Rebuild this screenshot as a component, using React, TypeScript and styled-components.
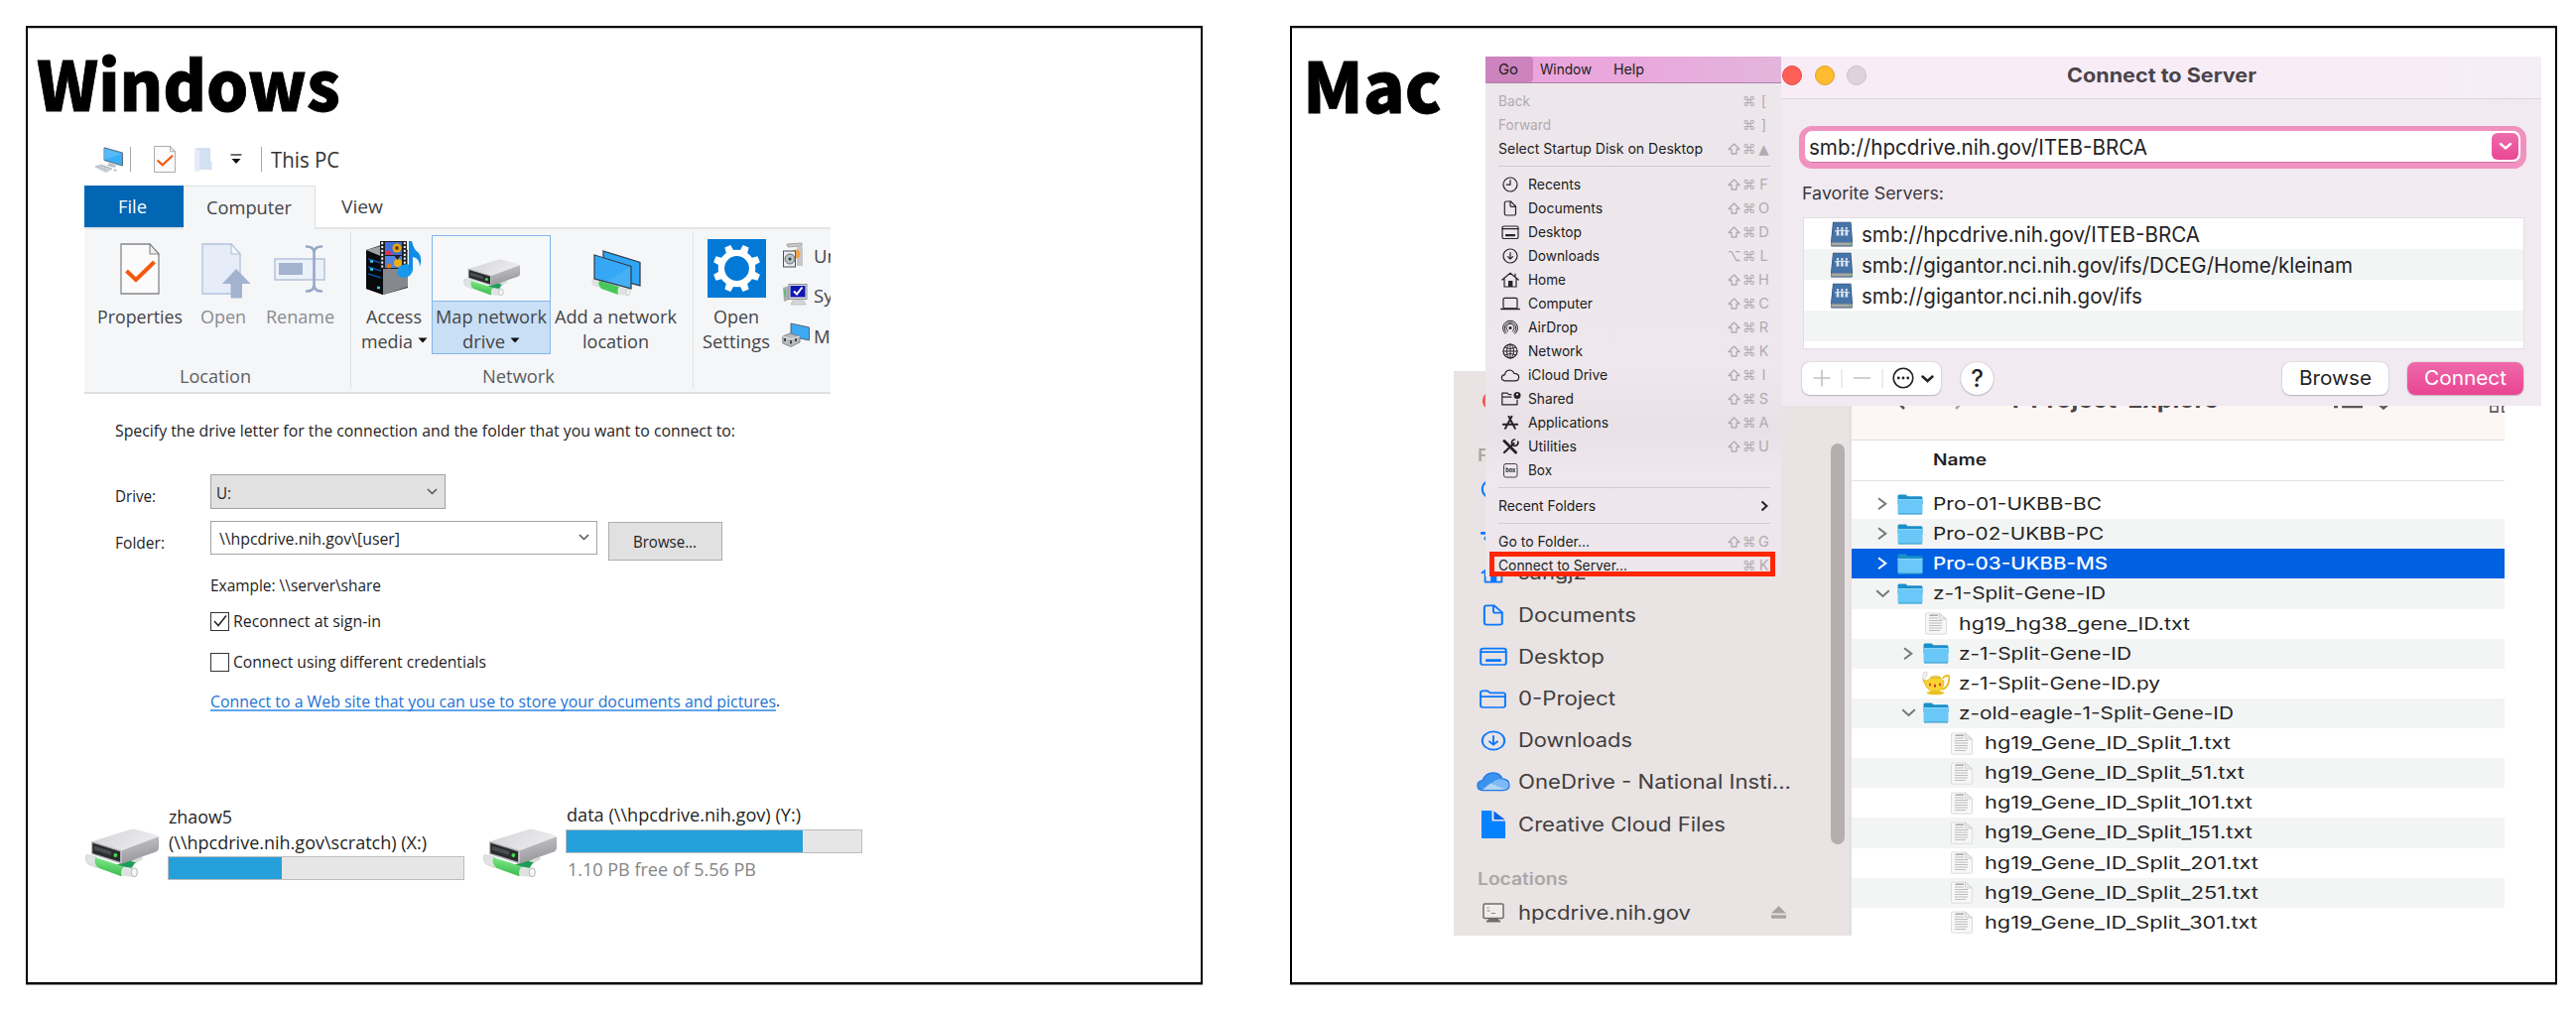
import React, { useLayoutEffect, useRef, useState } from "react";
import styled, { createGlobalStyle, css } from "styled-components";

const Global = createGlobalStyle`
  *, *::before, *::after { box-sizing: border-box; }
  body { margin: 0; background: #fff; }
  svg { display: block; flex: none; }
`;

const winFont = `"Open Sans", "Noto Sans", sans-serif`;
const macFont = `Inter, "Liberation Sans", sans-serif`;

/* ---------- text stretched to a given measure ---------- */

const Measure = styled.span<{ $w: number }>`
  display: block;
  flex: none;
  width: ${(p) => p.$w}px;
  white-space: pre;
`;
const Stretch = styled.span`
  display: inline-block;
  transform-origin: 0 50%;
`;
function Fit({ w, children }: { w: number; children: React.ReactNode }) {
  const ref = useRef<HTMLSpanElement>(null);
  const [scale, setScale] = useState(1);
  useLayoutEffect(() => {
    const el = ref.current;
    if (!el) return;
    el.style.transform = "none";
    const natural = el.getBoundingClientRect().width;
    const s = natural ? w / natural : 1;
    el.style.transform = `scaleX(${s})`;
    setScale(s);
  }, [w, children]);
  return (
    <Measure $w={w}>
      <Stretch ref={ref} style={{ transform: `scaleX(${scale})` }}>
        {children}
      </Stretch>
    </Measure>
  );
}

/* ---------- page ---------- */

const Page = styled.main`
  display: flex;
  gap: 88px;
  width: 2596px;
  height: 1020px;
  padding: 26px;
  background: #fff;
`;
const Panel = styled.section<{ $w: number }>`
  position: relative;
  flex: none;
  width: ${(p) => p.$w}px;
  height: 966px;
  border: 2px solid #000;
  box-shadow: inset 0 1px #b9b9b9, 0 1px #8a8a8a;
`;
const Title = styled.h1<{ $size: number; $indent: number; $line: number }>`
  height: 108px;
  margin: 0;
  padding-left: ${(p) => p.$indent}px;
  font: 900 ${(p) => p.$size}px/${(p) => p.$line}px "Noto Sans CJK SC", "Noto Sans", sans-serif;
  color: #000;
  -webkit-text-stroke: 0.8px #000;
`;

/* ---------- Windows icons ---------- */

const DriveIcon = ({ w = 57, h = 37 }: { w?: number; h?: number }) => (
  <svg width={w} height={h} viewBox="0 0 57 37" preserveAspectRatio="none">
    <defs>
      <linearGradient id="dTop" x1="0" y1="0" x2="1" y2="0.4">
        <stop offset="0" stopColor="#d2d3d6" />
        <stop offset="1" stopColor="#ececef" />
      </linearGradient>
      <linearGradient id="dSide" x1="0" y1="0" x2="0.3" y2="1">
        <stop offset="0" stopColor="#c9c9cc" />
        <stop offset="1" stopColor="#97979b" />
      </linearGradient>
      <linearGradient id="dTube" x1="0.2" y1="0" x2="0" y2="1">
        <stop offset="0" stopColor="#7ee886" />
        <stop offset="1" stopColor="#2fb244" />
      </linearGradient>
    </defs>
    <path d="M24 28 40 21 44 22 38 27 33 35 28 36z" fill="#1d9c58" />
    <path d="M35 25 43 21 45 23 40 26z" fill="#d9dcdb" />
    <path d="M1 20 9 22 9 30 2 27Q-1 23 1 20z" fill="#e0e3e1" stroke="#c4c8c6" strokeWidth=".5" />
    <path d="M8 22 30 29Q27 32 28 36.5L10 30Q6 26 8 22z" fill="url(#dTube)" />
    <path d="M30 29 39 30.5Q42 34 38.5 37L28 36Q27 31 30 29z" fill="#dfe3e0" />
    <ellipse cx="38" cy="33.4" rx="2.3" ry="3.2" fill="#f6f8f7" stroke="#b8bdba" strokeWidth=".8" />
    <path d="M5 10 35 .8Q37 0 39 .8L55 5Q57 6 55 7.5L28 18z" fill="url(#dTop)" />
    <path d="M28 17 57 6.2V15Q57 17 55 17.8L28 27z" fill="url(#dSide)" />
    <path d="M4.6 9.6 28 16.7V27L4.6 19.6z" fill="#b9babd" />
    <path d="M5.6 11 27 17.5V25.4L5.6 18.8z" fill="#2b2c2e" />
    <path d="M7 13.4 20 17.4V20.4L7 16.4z" fill="#4b4d50" />
    <circle cx="23.4" cy="20.4" r="1.5" fill="#3fe04c" />
  </svg>
);

const PageCheck = ({ w, h }: { w: number; h: number }) => (
  <svg width={w} height={h} viewBox="0 0 40 52" preserveAspectRatio="none">
    <path d="M1 1H30L39 11V51H1z" fill="#fbfbfc" stroke="#84878b" strokeWidth="1.3" />
    <path d="M30 1V11H39z" fill="#eceded" stroke="#84878b" strokeWidth="1.1" />
    <path d="M6.5 28 16 37 34.5 19" fill="none" stroke="#f3590f" strokeWidth="4" />
  </svg>
);

const OpenIcon = () => (
  <svg width="50" height="56" viewBox="0 0 50 56">
    <path d="M1 1H30L39 11V51H1z" fill="#e6edf9" stroke="#b3c2da" strokeWidth="1.3" />
    <path d="M30 1V11H39z" fill="#f4f7fc" stroke="#b3c2da" strokeWidth="1.1" />
    <path d="M35 26 49.5 41H41V55.500H29.500V41H21z" fill="#a3b3cf" />
  </svg>
);

const RenameIcon = () => (
  <svg width="52" height="48" viewBox="0 0 52 48">
    <rect x="1" y="14" width="50" height="21" fill="#ebf1fa" stroke="#acbcd8" strokeWidth="1.3" />
    <rect x="5" y="18" width="24" height="12" fill="#a3b3cf" />
    <path d="M32 1.500Q40.500 1 40.500 8V40Q40.500 47 32 46.500M49 1.500Q40.500 1 40.500 8M40.500 40Q40.500 47 49 46.500" fill="none" stroke="#97a9c8" strokeWidth="2.600" />
  </svg>
);

const MediaIcon = () => (
  <svg width="58" height="56" viewBox="0 0 58 56">
    <path d="M1 10 16 5 43 10V48L18 55 1 49z" fill="#2a2c2f" />
    <path d="M18 18 43 11V47L18 55z" fill="#85898e" />
    <path d="M1 10 18 17V55L1 49z" fill="#08090b" />
    <path d="M1 10 16 6 43 10 18 17z" fill="#9ea2a6" />
    <path d="M3 19 16 23M3 27 16 31M3 34 16 38" stroke="#0f4f9e" strokeWidth="1.400" />
    <path d="M5 21.500h3M5 29.500h3M12 48h3" stroke="#30cdf5" strokeWidth="2.600" />
    <rect x="15" y="1" width="27" height="28" fill="#1c1e22" />
    <rect x="20" y="2" width="17" height="13" fill="#3f70da" />
    <rect x="20" y="16" width="17" height="12" fill="#4f86e2" />
    <path d="M17.200 2V28M39.800 2V28" stroke="#e9edf0" strokeWidth="2" strokeDasharray="2.200 1.700" />
    <circle cx="32" cy="8" r="4.500" fill="#e9a90f" />
    <circle cx="32" cy="8" r="2" fill="#7a3f12" />
    <path d="M20 12q4-4 7 1l1 2h-8z" fill="#d2355b" />
    <circle cx="33" cy="23" r="4" fill="#eeae12" />
    <circle cx="24" cy="26" r="2.500" fill="#e07a14" />
    <path d="M29.500 16h6l-3 4z" fill="#272128" />
    <ellipse cx="40" cy="31" rx="8" ry="6.500" transform="rotate(-22 40 31)" fill="#1599ec" />
    <path d="M44 1H47Q49 10 54 13 58 18 55 27 55 18 48 17V30H44z" fill="#0f8ce6" />
  </svg>
);

const NetLocationIcon = () => (
  <svg width="50" height="46" viewBox="0 0 50 46">
    <path d="M1 29 8 31V38L2 36Q-1 32 1 29z" fill="#dfe3e0" />
    <path d="M8 31 28 37Q26 40 27 45L10 39Q6 35 8 31z" fill="#46c95a" />
    <path d="M28 37 38 39Q41 43 37 46L27 45z" fill="#dfe3e0" />
    <ellipse cx="37" cy="42.500" rx="2" ry="3" fill="#f6f8f7" stroke="#b9bdba" strokeWidth=".7" />
    <path d="M12 1 49 12.500V36L12 26z" fill="#2fa6f5" stroke="#35414d" strokeWidth="1.300" />
    <path d="M3 5 40 16.500V39L3 29z" fill="#45b0f7" stroke="#35414d" strokeWidth="1.300" />
    <path d="M39 17 16 31.500 4 28V6z" fill="#2ca2f4" opacity=".6" />
  </svg>
);

const GearTile = () => (
  <svg width="59" height="59" viewBox="0 0 59 59">
    <rect width="59" height="59" fill="#0279d7" />
    <circle cx="29.500" cy="29.500" r="15.600" fill="none" stroke="#fff" strokeWidth="6.400" />
    {[0, 1, 2, 3, 4, 5, 6, 7].map((i) => (
      <path key={i} d="M25.300 13 26.300 5.500H32.700L33.700 13z" fill="#fff" transform={`rotate(${22.5 + i * 45} 29.500 29.500)`} />
    ))}
  </svg>
);

const UninstallIcon = () => (
  <svg width="24" height="26" viewBox="0 0 24 26">
    <path d="M5 2 20 1V4L6 5z" fill="#c9c9c9" stroke="#8f8f8f" strokeWidth=".7" />
    <rect x="15" y="5" width="6" height="19" fill="#c6c6c8" />
    <circle cx="14" cy="12" r="4.500" fill="#f2a049" />
    <rect x="1.500" y="9" width="12" height="16" fill="#eceef0" stroke="#4d5358" />
    <circle cx="8" cy="17" r="5" fill="#b9c0c6" stroke="#6a7076" />
    <circle cx="8" cy="17" r="1.600" fill="#3c4146" />
  </svg>
);
const SystemIcon = () => (
  <svg width="27" height="24" viewBox="0 0 27 24">
    <path d="M1 5 7 3V17L2 19z" fill="#a9adb1" />
    <path d="M3 7v7" stroke="#38c553" strokeWidth="1.200" />
    <rect x="7" y="1.500" width="18" height="15" fill="#e2e2e0" stroke="#8a8d90" />
    <rect x="8.500" y="3" width="15" height="11.500" fill="#1216b4" />
    <path d="M12 8.500 15 11.500 20.500 4.500" fill="none" stroke="#fff" strokeWidth="2" />
    <path d="M11 18h11l2 4H9z" fill="#d8d8d8" stroke="#aaa" strokeWidth=".6" />
  </svg>
);
const ManageIcon = () => (
  <svg width="28" height="26" viewBox="0 0 28 26">
    <path d="M9 1 27.500 5V18L9 14z" fill="#3caaf4" stroke="#4c5b69" strokeWidth=".9" />
    <path d="M.8 14 8 11 18 14V20L9 24.500 .8 21z" fill="#b7babd" stroke="#73777b" strokeWidth=".8" />
    <path d="M.8 14 9 17 18 14" fill="none" stroke="#e9eaeb" />
    <path d="M3 16v3M9 18v3.500M14 16v3" stroke="#46494c" strokeWidth="2" />
  </svg>
);

const PcIcon = () => (
  <svg width="29" height="26" viewBox="0 0 29 26">
    <path d="M9 .8 27.500 6V19L9 13.500z" fill="#39acf6" stroke="#5b6b78" strokeWidth="1" />
    <path d="M27 7 9 13V1.500z" fill="#63c0fa" opacity=".7" />
    <path d="M14 16 21 18.500 20 21 12 19z" fill="#b9bfc4" />
    <path d="M0 20 6 18 17 22 11 25.500z" fill="#d5dade" stroke="#9aa2a9" strokeWidth=".6" />
    <path d="M3 20 12 23.500M6 19 14.500 22" stroke="#8f989f" strokeWidth=".7" strokeDasharray="2 1" />
    <path d="M19 22 22 23 21 25 18 24z" fill="#c4cacf" />
  </svg>
);
const PaleFolder = () => (
  <svg width="19" height="26" viewBox="0 0 19 26">
    <path d="M1 1H17V14L18.500 15V23H5L1 25z" fill="#d3e0f2" />
    <path d="M1 1 6 4V25.500L1 24z" fill="#e5edf8" />
  </svg>
);
const QatMenu = () => (
  <svg width="12" height="11" viewBox="0 0 12 11">
    <path d="M.5 1H11.500" stroke="#333" strokeWidth="1.400" />
    <path d="M1.500 5H10.500L6 10z" fill="#111" />
  </svg>
);
const Caret = () => (
  <svg width="10" height="6" viewBox="0 0 10 6">
    <path d="M.5 .5H9.500L5 5.500z" fill="#111" />
  </svg>
);

/* ---------- Windows ribbon ---------- */

const QuickBar = styled.div`
  display: flex;
  align-items: center;
  height: 49px;
  margin: 0 0 2px 68px;
  font: 400 21.500px/30px ${winFont};
  color: #333;
`;
const Bar = styled.i<{ $l: number; $r: number }>`
  width: 1px;
  height: 25px;
  margin: 0 ${(p) => p.$r}px 0 ${(p) => p.$l}px;
  background: #a5a5a5;
`;
const Gap = styled.i<{ $w: number }>`
  flex: none;
  width: ${(p) => p.$w}px;
`;
const Ribbon = styled.div`
  width: 752px;
  margin-left: 57px;
  font: 400 18.500px/25px ${winFont};
  color: #434548;
`;
const Tabs = styled.div`
  display: flex;
  height: 42px;
`;
const Tab = styled.div<{ $w: number; $kind: "file" | "open" | "plain" }>`
  display: flex;
  align-items: center;
  justify-content: center;
  width: ${(p) => p.$w}px;
  height: 42px;
  padding-bottom: 1px;
  ${(p) =>
    p.$kind === "file" &&
    css`
      padding-right: 3px;
      background: #0166b4;
      color: #fff;
    `}
  ${(p) =>
    p.$kind === "open" &&
    css`
      height: 44px;
      padding-bottom: 3px;
      z-index: 1;
      background: #f5f6f8;
      border: solid #dcdee0;
      border-width: 1px 1px 0 0;
    `}
`;
const RibbonBody = styled.div`
  display: flex;
  height: 168px;
  overflow: hidden;
  background: #f5f6f8;
  border-top: 2px solid #e2e4e6;
  border-bottom: 2px solid #dddfe1;
`;
const Group = styled.div<{ $w: number; $pad?: number; $last?: boolean }>`
  display: flex;
  flex: none;
  flex-direction: column;
  width: ${(p) => p.$w}px;
  height: 159px;
  margin-top: 2px;
  padding-left: ${(p) => p.$pad ?? 0}px;
  border-right: ${(p) => (p.$last ? "none" : "1px solid #dfe1e4")};
`;
const Buttons = styled.div`
  display: flex;
  flex: none;
  height: 124px;
  padding-top: 4px;
`;
const RibbonButton = styled.div<{ $w: number; $muted?: boolean; $hot?: boolean }>`
  display: flex;
  flex: none;
  flex-direction: column;
  align-items: center;
  width: ${(p) => p.$w}px;
  height: 120px;
  color: ${(p) => (p.$muted ? "#888c91" : "inherit")};
  ${(p) =>
    p.$hot &&
    css`
      outline: 1px solid #82b6eb;
      outline-offset: -1px;
      background: linear-gradient(#f6f8fa 66px, #82b6eb 66px 67px, #c9dff6 67px);
    `}
`;
const IconSlot = styled.div<{ $top: number }>`
  display: flex;
  flex: none;
  justify-content: center;
  width: 100%;
  height: 68.500px;
  padding-top: ${(p) => p.$top}px;
`;
const Line = styled.div`
  display: flex;
  align-items: center;
  gap: 5px;
  height: 25px;
`;
const GroupName = styled.div<{ $l: number }>`
  margin-top: 9px;
  padding-left: ${(p) => p.$l}px;
  color: #5c5e61;
`;
const SmallList = styled.div`
  display: flex;
  flex-direction: column;
  gap: 15.500px;
  padding: 7px 0 0 8px;
`;
const SmallItem = styled.div`
  display: grid;
  grid-template-columns: 32px auto;
  align-items: center;
  height: 25px;
  white-space: nowrap;
`;

function WindowsRibbon() {
  return (
    <Ribbon>
      <Tabs>
        <Tab $w={100} $kind="file"><Fit w={29}>File</Fit></Tab>
        <Tab $w={133} $kind="open"><Fit w={86}>Computer</Fit></Tab>
        <Tab $w={93} $kind="plain"><Fit w={42}>View</Fit></Tab>
      </Tabs>
      <RibbonBody>
        <Group $w={269}>
          <Buttons>
            <RibbonButton $w={111}>
              <IconSlot $top={8}><PageCheck w={40} h={52} /></IconSlot>
              <Line><Fit w={86}>Properties</Fit></Line>
            </RibbonButton>
            <RibbonButton $w={58} $muted>
              <IconSlot $top={8}><Gap $w={5} /><OpenIcon /></IconSlot>
              <Line><Fit w={46}>Open</Fit></Line>
            </RibbonButton>
            <RibbonButton $w={96} $muted>
              <IconSlot $top={10}><RenameIcon /></IconSlot>
              <Line><Fit w={69}>Rename</Fit></Line>
            </RibbonButton>
          </Buttons>
          <GroupName $l={96}><Fit w={72}>Location</Fit></GroupName>
        </Group>
        <Group $w={345} $pad={5}>
          <Buttons>
            <RibbonButton $w={76}>
              <IconSlot $top={5}><MediaIcon /></IconSlot>
              <Line><Fit w={56}>Access</Fit></Line>
              <Line><Fit w={52}>media</Fit><Caret /></Line>
            </RibbonButton>
            <RibbonButton $w={120} $hot>
              <IconSlot $top={24}><DriveIcon /></IconSlot>
              <Line><Fit w={112}>Map network</Fit></Line>
              <Line><Fit w={43}>drive</Fit><Caret /></Line>
            </RibbonButton>
            <RibbonButton $w={131}>
              <IconSlot $top={15}><NetLocationIcon /></IconSlot>
              <Line><Fit w={123}>Add a network</Fit></Line>
              <Line><Fit w={67}>location</Fit></Line>
            </RibbonButton>
          </Buttons>
          <GroupName $l={127}><Fit w={73}>Network</Fit></GroupName>
        </Group>
        <Group $w={138} $pad={5} $last>
          <Buttons>
            <RibbonButton $w={76}>
              <IconSlot $top={4}><GearTile /></IconSlot>
              <Line><Fit w={46}>Open</Fit></Line>
              <Line><Fit w={68}>Settings</Fit></Line>
            </RibbonButton>
            <SmallList>
              <SmallItem><UninstallIcon />Un</SmallItem>
              <SmallItem><SystemIcon />Sy</SmallItem>
              <SmallItem><ManageIcon />M</SmallItem>
            </SmallList>
          </Buttons>
        </Group>
      </RibbonBody>
    </Ribbon>
  );
}

/* ---------- Windows dialog ---------- */

const Form = styled.div`
  padding-left: 88px;
  font: 400 16.800px/24px ${winFont};
  color: #1d1d1d;
`;
const Intro = styled.div`
  padding-top: 24.500px;
`;
const Row = styled.div<{ $top: number; $h: number }>`
  display: flex;
  height: ${(p) => p.$h}px;
  margin-top: ${(p) => p.$top}px;
`;
const RowLabel = styled.div<{ $top: number }>`
  width: 96px;
  padding-top: ${(p) => p.$top}px;
`;
const Combo = styled.div<{ $w: number; $h: number; $fill: string; $pad: number }>`
  display: flex;
  align-items: center;
  justify-content: space-between;
  width: ${(p) => p.$w}px;
  height: ${(p) => p.$h}px;
  padding: 2px 7px 0 ${(p) => p.$pad}px;
  background: ${(p) => p.$fill};
  border: 1.500px solid #a3a3a3;

  svg {
    margin-bottom: 3px;
  }
`;
const PushButton = styled.div`
  display: flex;
  align-items: center;
  justify-content: center;
  width: 115px;
  height: 39px;
  margin: 1px 0 0 10.500px;
  padding-top: 1px;
  background: #e1e1e1;
  border: 1px solid #adadad;
`;
const Field = styled.div<{ $top: number }>`
  display: flex;
  align-items: center;
  height: 24px;
  margin: ${(p) => p.$top}px 0 0 96px;
`;
const Check = styled.div`
  display: flex;
  align-items: center;
  justify-content: center;
  width: 19px;
  height: 19px;
  margin-right: 4px;
  border: 1.500px solid #333;
  background: #fff;
`;
const WebLink = styled.span`
  display: block;
  height: 22px;
  line-height: 24px;
  border-bottom: 2px solid #62a5ea;
  color: #1a72d6;
`;
const ComboChevron = () => (
  <svg width="11" height="7" viewBox="0 0 11 7">
    <path d="M1 1 5.500 5.500 10 1" fill="none" stroke="#555" strokeWidth="1.500" />
  </svg>
);

function MapDialog() {
  return (
    <Form>
      <Intro><Fit w={625}>Specify the drive letter for the connection and the folder that you want to connect to:</Fit></Intro>
      <Row $top={32.5} $h={35}>
        <RowLabel $top={10}><Fit w={41}>Drive:</Fit></RowLabel>
        <Combo $w={237} $h={35} $fill="#e1e1e1" $pad={5}><Fit w={15}>U:</Fit><ComboChevron /></Combo>
      </Row>
      <Row $top={12} $h={40}>
        <RowLabel $top={9.5}><Fit w={50}>Folder:</Fit></RowLabel>
        <Combo $w={390} $h={34} $fill="#fff" $pad={8}><Fit w={182}>{"\\\\hpcdrive.nih.gov\\[user]"}</Fit><ComboChevron /></Combo>
        <PushButton><Fit w={64}>Browse...</Fit></PushButton>
      </Row>
      <Field $top={13}><Fit w={172}>{"Example: \\\\server\\share"}</Fit></Field>
      <Field $top={12}>
        <Check>
          <svg width="14" height="14" viewBox="0 0 14 14">
            <path d="M1 7 5 11.500 13 1.500" fill="none" stroke="#222" strokeWidth="1.500" />
          </svg>
        </Check>
        <Fit w={149}>Reconnect at sign-in</Fit>
      </Field>
      <Field $top={17}><Check /><Fit w={255}>Connect using different credentials</Fit></Field>
      <Field $top={15}>
        <WebLink><Fit w={570}>Connect to a Web site that you can use to store your documents and pictures</Fit></WebLink>
        <Fit w={4}>.</Fit>
      </Field>
    </Form>
  );
}

/* ---------- Windows network drives ---------- */

const Drives = styled.div`
  display: flex;
  padding: 89px 0 0 58px;
  font: 400 17.800px/26px ${winFont};
  color: #1f1f1f;
`;
const DriveArt = styled.div`
  width: 83px;
  padding-top: 28px;
`;
const DriveInfo = styled.div<{ $w: number; $top: number }>`
  width: ${(p) => p.$w}px;
  padding-top: ${(p) => p.$top}px;
`;
const Caption = styled.div<{ $muted?: boolean }>`
  padding-top: ${(p) => (p.$muted ? 3 : 0)}px;
  padding-left: ${(p) => (p.$muted ? 2 : 1)}px;
  color: ${(p) => (p.$muted ? "#868686" : "inherit")};
`;
const Meter = styled.div<{ $top: number }>`
  width: 299px;
  height: 24px;
  margin-top: ${(p) => p.$top}px;
  background: #e6e6e6;
  border: 1px solid #bcbcbc;
`;
const MeterFill = styled.div`
  height: 100%;
  background: #26a0da;
`;

/* ---------- Mac icons ---------- */

type Glyph =
  | "clock" | "doc" | "desktop" | "down" | "home" | "laptop" | "airdrop" | "globe"
  | "cloud" | "shared" | "apps" | "tools" | "box" | "folder";

function MacGlyph({ name, w = 20, h = 16, color = "#262328", sw = 1.2 }: { name: Glyph; w?: number; h?: number; color?: string; sw?: number }) {
  const s = { fill: "none", stroke: color, strokeWidth: sw, strokeLinejoin: "round" as const, strokeLinecap: "round" as const };
  return (
    <svg width={w} height={h} viewBox="0 0 20 16" preserveAspectRatio="none" overflow="visible">
      {name === "clock" && <><circle cx="10" cy="8" r="7" {...s} /><path d="M10 3.500V8.200H6.300" {...s} /></>}
      {name === "doc" && <><path d="M5.500 1H10.500L15.500 6V13.600Q15.500 15 14 15H5.900Q4.300 15 4.300 13.600V2.400Q4.300 1 5.900 1z" {...s} /><path d="M10 1V5Q10 6.300 11.300 6.300H15.500" {...s} /></>}
      {name === "desktop" && <><rect x="2" y="2" width="16" height="12.500" rx="1.600" {...s} /><path d="M2 4.700H18" {...s} /><rect x="5" y="10" width="10" height="2.200" rx=".6" fill={color} /></>}
      {name === "down" && <><circle cx="10" cy="8" r="7" {...s} /><path d="M10 4.500V11M7.500 8.700 10 11.200 12.500 8.700" {...s} /></>}
      {name === "home" && <><path d="M1.800 8 10 1.200 18.200 8M4 7V15H16V7M15 4.500V2.200" {...s} /><rect x="8" y="9" width="4.400" height="6" fill={color} /></>}
      {name === "laptop" && <><rect x="3" y="2.300" width="14" height="10.500" rx="1.200" {...s} /><path d="M.8 13.500H19.200" {...s} strokeWidth={sw * 1.35} /></>}
      {name === "airdrop" && <><circle cx="10" cy="8.500" r="1.600" fill={color} /><path d="M7.800 11.800A4 4 0 1 1 12.200 11.800M6.400 13.300A5.800 5.800 0 1 1 13.600 13.300M5 14.300A7.500 7.500 0 1 1 15 14.300" {...s} strokeWidth={sw * 0.8} /></>}
      {name === "globe" && <><circle cx="10" cy="8" r="7" {...s} /><path d="M3 8H17M10 1V15M4.500 4Q10 7 15.500 4M4.500 12Q10 9 15.500 12" {...s} strokeWidth={sw * 0.8} /><ellipse cx="10" cy="8" rx="3.500" ry="7" {...s} strokeWidth={sw * 0.8} /></>}
      {name === "cloud" && <path d="M5 13.800Q1.300 13.600 1.300 10.600 1.500 7.800 4.600 7.600 5 3.400 9.200 3 12.500 3 13.800 6.300 18.700 6.400 18.700 10.200 18.500 13.800 14.700 13.800z" {...s} />}
      {name === "shared" && <><path d="M11 3.700H8.500L7 2.200H1.800V13.800H17V9M1.800 6.200H11" {...s} /><circle cx="17" cy="4.500" r="3.500" fill={color} /><circle cx="17" cy="3.600" r="1.100" fill="#ede6eb" /></>}
      {name === "apps" && <path d="M11.500 1.800 5 13.800M8.500 1.800 14.800 13.800M2.800 9.800H11.500M14 9.800H17.200" {...s} strokeWidth={sw * 1.6} />}
      {name === "tools" && <><path d="M4 2.500 15.500 14" {...s} strokeWidth={sw * 2.5} /><path d="M4 14 13.500 5" {...s} strokeWidth={sw * 1.8} /><path d="M17.700 3.200A3.200 3.200 0 1 1 14.400 1" {...s} strokeWidth={sw * 1.400} /></>}
      {name === "box" && <><rect x="3.500" y="1.500" width="13.500" height="13.500" rx="2" {...s} strokeWidth={sw * 0.7} /><text x="10.200" y="10.200" fontSize="5.500" fontFamily="Inter" fontWeight="700" textAnchor="middle" fill={color}>box</text></>}
      {name === "folder" && <><path d="M2 3.200Q2 1.800 3.400 1.800H6.500L8.200 3.300H16.600Q18 3.300 18 4.700V13Q18 14.500 16.600 14.500H3.400Q2 14.500 2 13z" {...s} /><path d="M2 6.200H18" {...s} /></>}
    </svg>
  );
}

/* ---------- Mac Go menu ---------- */

const Window = styled.div<{ $x: number; $y: number; $w: number; $h: number }>`
  position: absolute;
  left: ${(p) => p.$x}px;
  top: ${(p) => p.$y}px;
  width: ${(p) => p.$w}px;
  height: ${(p) => p.$h}px;
  overflow: hidden;
  font-family: ${macFont};
`;
const GoMenu = styled(Window)`
  background: linear-gradient(#ede7eb, #eee7ec 60%, #e9e1e6 72%, #efe7ed 80%, #ede6eb);
  font-size: 14.200px;
  line-height: 24px;
  color: #211e22;
`;
const MenuBar = styled.div`
  display: flex;
  align-items: center;
  height: 27px;
  padding-bottom: 1px;
  background: linear-gradient(90deg, #eaa4dc, #e9a8dc 50%, #e3b5dc);
  border-bottom: 1px solid #ad7fa9;
`;
const MenuTitle = styled.div<{ $w: number; $pad: number; $on?: boolean }>`
  display: flex;
  align-items: center;
  flex: none;
  width: ${(p) => p.$w}px;
  height: 26px;
  padding-left: ${(p) => p.$pad}px;
  border-radius: 0 4px 4px 0;
  background: ${(p) => (p.$on ? "#cd83bd" : "none")};
`;
const MenuRows = styled.div`
  padding: 6.300px 10px 0 12.500px;
`;
const MenuRow = styled.div<{ $muted?: boolean }>`
  display: grid;
  grid-template-columns: 1fr 15px 15px 15px;
  align-items: center;
  height: 24px;
  color: ${(p) => (p.$muted ? "#b0aaaf" : "inherit")};
`;
const RowMain = styled.div`
  display: flex;
  align-items: center;
`;
const MenuIcon = styled.div`
  display: flex;
  width: 30px;
  padding-left: 2px;
`;
const Key = styled.span<{ $sym?: boolean }>`
  display: flex;
  justify-content: center;
  color: #b1abb0;
  font-family: ${(p) => (p.$sym ? `"DejaVu Sans"` : macFont)}, sans-serif;
  font-size: ${(p) => (p.$sym ? 13.5 : 14.5)}px;
`;
const Rule = styled.div`
  width: 274px;
  height: 1px;
  margin: 4.500px 0 6.500px;
  background: #d0c9ce;
`;
const RedFrame = styled.div`
  position: absolute;
  left: 4px;
  top: 499px;
  width: 288px;
  height: 25px;
  border: 5px solid #ff2600;
`;
const ShiftKey = () => (
  <svg width="13" height="12" viewBox="0 0 13 12">
    <path d="M6.500 1 12 6.500H9V11H4V6.500H1z" fill="none" stroke="#b1abb0" strokeWidth="1.300" strokeLinejoin="round" />
  </svg>
);
const OptionKey = () => (
  <svg width="13" height="12" viewBox="0 0 13 12">
    <path d="M1 1.700H4L9 10.500H12.500M8 1.700H12.500" fill="none" stroke="#b1abb0" strokeWidth="1.300" />
  </svg>
);

type Entry = { label: string; w: number; icon?: Glyph; keys?: [string, string, string]; muted?: boolean };
const topEntries: Entry[] = [
  { label: "Back", w: 32, keys: ["", "⌘", "["], muted: true },
  { label: "Forward", w: 53, keys: ["", "⌘", "]"], muted: true },
  { label: "Select Startup Disk on Desktop", w: 206, keys: ["shift", "⌘", "▲"] },
];
const places: Entry[] = [
  { label: "Recents", w: 53, icon: "clock", keys: ["shift", "⌘", "F"] },
  { label: "Documents", w: 75, icon: "doc", keys: ["shift", "⌘", "O"] },
  { label: "Desktop", w: 54, icon: "desktop", keys: ["shift", "⌘", "D"] },
  { label: "Downloads", w: 72, icon: "down", keys: ["option", "⌘", "L"] },
  { label: "Home", w: 38, icon: "home", keys: ["shift", "⌘", "H"] },
  { label: "Computer", w: 65, icon: "laptop", keys: ["shift", "⌘", "C"] },
  { label: "AirDrop", w: 50, icon: "airdrop", keys: ["shift", "⌘", "R"] },
  { label: "Network", w: 55, icon: "globe", keys: ["shift", "⌘", "K"] },
  { label: "iCloud Drive", w: 80, icon: "cloud", keys: ["shift", "⌘", "I"] },
  { label: "Shared", w: 46, icon: "shared", keys: ["shift", "⌘", "S"] },
  { label: "Applications", w: 81, icon: "apps", keys: ["shift", "⌘", "A"] },
  { label: "Utilities", w: 49, icon: "tools", keys: ["shift", "⌘", "U"] },
  { label: "Box", w: 24, icon: "box" },
];
const lastEntries: Entry[] = [
  { label: "Go to Folder...", w: 92, keys: ["shift", "⌘", "G"] },
  { label: "Connect to Server...", w: 130, keys: ["", "⌘", "K"] },
];

function EntryRow({ e }: { e: Entry }) {
  return (
    <MenuRow $muted={e.muted}>
      <RowMain>
        {e.icon && <MenuIcon><MacGlyph name={e.icon} /></MenuIcon>}
        <Fit w={e.w}>{e.label}</Fit>
      </RowMain>
      {e.keys?.map((k, i) => (
        <Key key={i} $sym={i < 2 || k === "▲"}>
          {k === "shift" ? <ShiftKey /> : k === "option" ? <OptionKey /> : k}
        </Key>
      ))}
    </MenuRow>
  );
}

/* ---------- Mac Connect to Server ---------- */

const Connect = styled(Window)`
  background: #f1eaf1;
  color: #262326;
`;
const TitleBar = styled.div`
  display: flex;
  align-items: center;
  height: 43px;
  padding: 0 0 4px 1px;
  background: linear-gradient(90deg, #f8edf7 85%, #f4eef6);
  border-bottom: 1.500px solid #dcd3dc;
`;
const Light = styled.i<{ $c: string; $b: string }>`
  flex: none;
  width: 20px;
  height: 20px;
  margin-right: 12.600px;
  border-radius: 50%;
  background: ${(p) => p.$c};
  border: 1px solid ${(p) => p.$b};
`;
const WindowTitle = styled.div`
  margin-left: 189px;
  font: 700 20px/28px ${macFont};
  color: #4a444a;
`;
const Body = styled.div`
  padding: 27px 15px 0 18px;
`;
const Address = styled.div`
  display: flex;
  align-items: center;
  justify-content: space-between;
  height: 42.500px;
  padding: 0 2px 0 4px;
  background: #fff;
  border: 5.800px solid #f092c0;
  border-width: 5px 6px 6px 6px;
  border-radius: 13px;
  box-shadow: inset 0 -1px #cf76a5;
  font-size: 21.500px;
  line-height: 28px;
`;
const DropButton = styled.div`
  display: flex;
  align-items: center;
  justify-content: center;
  width: 27px;
  height: 27px;
  border-radius: 6px;
  background: linear-gradient(#ed6cab, #ea4795);
`;
const ListCaption = styled.div`
  padding: 12px 0 0 3px;
  font-size: 17.300px;
  line-height: 25px;
  color: #3b373b;
`;
const ServerList = styled.div`
  width: 727px;
  height: 133px;
  margin: 12.500px 0 0 3.500px;
  overflow: hidden;
  background: #fff;
  border: 1.500px solid #e2dfe2;
`;
const ServerRow = styled.div<{ $alt: boolean }>`
  display: flex;
  align-items: center;
  gap: 7.500px;
  height: 31px;
  padding-left: 26.500px;
  background: ${(p) => (p.$alt ? "#f3f5f5" : "#fff")};
  font-size: 21.500px;
  line-height: 28px;
`;
const Footer = styled.div`
  display: flex;
  align-items: center;
  height: 33px;
  margin: 13px 0 0 3px;
`;
const pill = css`
  display: flex;
  align-items: center;
  justify-content: center;
  height: 33px;
  background: #fff;
  border-radius: 8px;
  box-shadow: 0 0 1.500px rgba(0, 0, 0, 0.28), 0 1px 1.500px rgba(0, 0, 0, 0.18);
  font-size: 20.300px;
  line-height: 28px;
`;
const Segments = styled.div`
  ${pill}
  width: 140px;
`;
const Help = styled.div`
  ${pill}
  width: 33px;
  margin-left: 20px;
  border-radius: 50%;
  font-size: 24px;
  font-weight: 500;
`;
const ActionButton = styled.div<{ $w: number; $l: string; $primary?: boolean }>`
  ${pill}
  width: ${(p) => p.$w}px;
  margin-left: ${(p) => p.$l};
  padding: 0 1px 1px 0;
  ${(p) =>
    p.$primary &&
    css`
      background: linear-gradient(#ee6aab, #ea4492);
      color: #fff;
    `}
`;
const Actions = styled.div`
  display: flex;
  margin-left: auto;
`;
const ServerIcon = () => (
  <svg width="24" height="26" viewBox="0 0 24 26">
    <path d="M3 .8H21.500L23 21V24.500Q23 25.500 22 25.500H2Q1 25.500 1 24.500V21z" fill="#2c4a70" />
    <path d="M3.400 1.200H21L22.500 21H1.500z" fill="#4673a8" />
    <path d="M1.300 21.300H22.700V24.600H1.300z" fill="#a8aaa6" />
    <path d="M19 23h2.500" stroke="#4fd04c" strokeWidth="1.200" />
    <path d="M5 10Q12 8 20 10" fill="none" stroke="#e8f0f8" strokeWidth="1" />
    <g fill="#f2f6fa">
      <circle cx="8" cy="7" r="1.100" /><circle cx="12.400" cy="7" r="1.100" /><circle cx="16.800" cy="7" r="1.100" />
      <path d="M7 8.500h2l.5 6H6.500zM11.400 8.500h2l.5 6h-3zM15.800 8.500h2l.5 6h-3z" opacity=".85" />
    </g>
  </svg>
);
const SegmentArt = () => (
  <svg width="140" height="33" viewBox="0 0 140 33">
    <path d="M11.500 16H28.500M20 7.500V24.500M52 16H69" stroke="#c3c0c3" strokeWidth="1.600" />
    <path d="M40 7V26M81 7V26" stroke="#dcdadc" strokeWidth="1" />
    <circle cx="102" cy="16" r="9.800" fill="none" stroke="#242124" strokeWidth="1.600" />
    <g fill="#242124"><circle cx="97.300" cy="16" r="1.400" /><circle cx="102" cy="16" r="1.400" /><circle cx="106.700" cy="16" r="1.400" /></g>
    <path d="M121.500 14.500 126.500 19 131.500 14.500" fill="none" stroke="#242124" strokeWidth="2.500" strokeLinecap="round" />
  </svg>
);

/* ---------- Mac Finder ---------- */

const Finder = styled(Window)`
  display: flex;
  background: #fff;
`;
const Sidebar = styled.div`
  position: relative;
  flex: none;
  width: 401px;
  height: 569px;
  padding-left: 22px;
  background: linear-gradient(90deg, #e9e3e3 396px, #e5dede 401px);
`;
const SideLights = styled.div`
  display: flex;
  align-items: center;
  height: 59px;
  padding-left: 7px;
`;
const SideHeading = styled.div<{ $top: number }>`
  margin-top: ${(p) => p.$top}px;
  padding-left: 1.500px;
  font: 600 17px/26px ${macFont};
  color: #aca6a6;
`;
const SideItem = styled.div`
  display: flex;
  align-items: center;
  height: 42.200px;
  font: 400 19.500px/28px ${macFont};
  color: #413e3e;
`;
const SideIcon = styled.div`
  display: flex;
  align-items: center;
  justify-content: center;
  width: 35px;
  margin-right: 7.500px;
`;
const Thumb = styled.div`
  position: absolute;
  left: 380px;
  top: 73px;
  width: 14px;
  height: 404px;
  border-radius: 7px;
  background: #b4afaf;
`;
const Main = styled.div`
  flex: none;
  width: 658px;
  height: 569px;
  overflow: hidden;
`;
const Toolbar = styled.div`
  display: flex;
  align-items: center;
  height: 70px;
  padding-bottom: 10.500px;
  overflow: hidden;
  background: #fcf6f5;
  border-bottom: 1px solid #dedddc;
  font: 700 23px/30px ${macFont};
  color: #4b4747;
`;
const NameHeader = styled.div`
  height: 41px;
  padding: 0 0 0 81.500px;
  border-bottom: 1px solid #e3e3e3;
  font: 600 16px/38px ${macFont};
  color: #222;
`;
const Files = styled.div`
  padding-top: 8px;
`;
const FileRow = styled.div<{ $alt: boolean; $sel?: boolean; $depth: number }>`
  display: flex;
  align-items: center;
  height: 30.140px;
  padding-left: ${(p) => 23 + p.$depth * 26}px;
  background: ${(p) => (p.$sel ? "#0060e2" : p.$alt ? "#f3f5f5" : "#fff")};
  color: ${(p) => (p.$sel ? "#fff" : "#232323")};
  font: ${(p) => (p.$sel ? 500 : 400)} 17px/28px ${macFont};
`;
const Twist = styled.div`
  display: flex;
  align-items: center;
  justify-content: center;
  width: 16px;
  margin-right: 6px;
`;
const FileArt = styled.div`
  display: flex;
  justify-content: center;
  width: 27px;
  margin-right: 9.500px;
`;
const FolderArt = () => (
  <svg width="26" height="21" viewBox="0 0 26 21">
    <path d="M.5 2Q.5 .5 2 .5H8.500L10.500 2.300H24Q25.500 2.300 25.500 3.800V10H.5z" fill="#1b8fc9" />
    <path d="M.5 5.200H25.500V18.500Q25.500 20 24 20H2Q.5 20 .5 18.500z" fill="#6ac8f8" />
    <path d="M.5 5.600H25.500" stroke="#90dbff" strokeWidth=".9" />
    <path d="M1 20H25" stroke="#3b9fd0" strokeWidth="1.200" />
  </svg>
);
const TextArt = () => (
  <svg width="24" height="23" viewBox="0 0 24 23">
    <path d="M2 1H15.500L22.500 7V21.500Q22.500 22.200 21.500 22.200H2.500Q1.500 22.200 1.500 21.500V1.500z" fill="#f7f7f7" stroke="#dadada" strokeWidth=".9" />
    <path d="M15.500 1V6Q15.500 7 17 7H22.500z" fill="#e9e9e9" stroke="#cccccc" strokeWidth=".8" />
    <path d="M5 3.500H14M5 6H14M5 8.500H18M5 11H18M5 13.500H18M5 16H18M5 18.500H16" stroke="#bcbcbc" strokeWidth="1.100" />
    <path d="M6 3H14" stroke="#999" strokeWidth="1" />
  </svg>
);
const TeapotArt = () => (
  <svg width="29" height="25" viewBox="0 0 29 25">
    <path d="M2 10Q0 6 2.500 4 1.500 1.500 4.500 1 7 1 6 4 6 6 4 7z" fill="#f1f1ef" stroke="#c8c8c4" strokeWidth=".6" />
    <path d="M22 8Q23 5 27 5 29 5 28 10 27 17 21 19" fill="none" stroke="#e8bd1e" strokeWidth="1.800" />
    <path d="M2 9.500 6 10Q9 7 15 7 21 7 23 10.500 23 18 18 20.500H10Q5 18 2 9.500z" fill="#f8d532" stroke="#d9a916" strokeWidth=".7" />
    <path d="M9 7Q15 3.500 20 7z" fill="#fbe36a" stroke="#d9a916" strokeWidth=".7" />
    <ellipse cx="14.500" cy="22.300" rx="9" ry="2" fill="#e9c322" />
    <path d="M9 12l1.100 2L9 16l-1.100-2zM14 13l1.200 2.200-1.200 2.200-1.200-2.200zM19 12l1.100 2L19 16l-1.100-2z" fill="#dd2330" />
  </svg>
);
const TwistArt = ({ open, sel }: { open: boolean; sel?: boolean }) =>
  open ? (
    <svg width="15" height="9" viewBox="0 0 15 9"><path d="M1.200 1.200 7.500 7 13.800 1.200" fill="none" stroke="#777" strokeWidth="2" /></svg>
  ) : (
    <svg width="10" height="14" viewBox="0 0 10 14"><path d="M1 1.300 8.300 6.700 1 12.200" fill="none" stroke={sel ? "#fff" : "#777"} strokeWidth="2" /></svg>
  );

type FileEntry = { name: string; w: number; depth: number; art: "folder" | "text" | "tea"; twist?: "open" | "shut"; sel?: boolean };
const files: FileEntry[] = [
  { name: "Pro-01-UKBB-BC", w: 170, depth: 0, art: "folder", twist: "shut" },
  { name: "Pro-02-UKBB-PC", w: 172, depth: 0, art: "folder", twist: "shut" },
  { name: "Pro-03-UKBB-MS", w: 176, depth: 0, art: "folder", twist: "shut", sel: true },
  { name: "z-1-Split-Gene-ID", w: 174, depth: 0, art: "folder", twist: "open" },
  { name: "hg19_hg38_gene_ID.txt", w: 233, depth: 1, art: "text" },
  { name: "z-1-Split-Gene-ID", w: 174, depth: 1, art: "folder", twist: "shut" },
  { name: "z-1-Split-Gene-ID.py", w: 203, depth: 1, art: "tea" },
  { name: "z-old-eagle-1-Split-Gene-ID", w: 277, depth: 1, art: "folder", twist: "open" },
  { name: "hg19_Gene_ID_Split_1.txt", w: 248, depth: 2, art: "text" },
  { name: "hg19_Gene_ID_Split_51.txt", w: 262, depth: 2, art: "text" },
  { name: "hg19_Gene_ID_Split_101.txt", w: 270, depth: 2, art: "text" },
  { name: "hg19_Gene_ID_Split_151.txt", w: 270, depth: 2, art: "text" },
  { name: "hg19_Gene_ID_Split_201.txt", w: 276, depth: 2, art: "text" },
  { name: "hg19_Gene_ID_Split_251.txt", w: 276, depth: 2, art: "text" },
  { name: "hg19_Gene_ID_Split_301.txt", w: 275, depth: 2, art: "text" },
];

const blue = "#0a78ff";
const OneDriveArt = () => (
  <svg width="34" height="20" viewBox="0 0 34 20">
    <path d="M6 18.500Q1 18.500 1 13.500 1 9.500 6 8.700 9 1 17 1 23.500 1 26 7 33 7.500 33 13.500 33 18.500 27 18.500z" fill="#3b93ee" stroke="#2179e4" strokeWidth="1.300" />
    <path d="M6 18 19 8.500Q23 6.500 26 7.600 32.400 8.500 32.400 13.500 32 18 27 18z" fill="#7fb8f5" />
    <path d="M6 18 14 11.500 29 17.800z" fill="#b4d5f8" />
  </svg>
);
const CreativeArt = () => (
  <svg width="24" height="28" viewBox="0 0 24 28">
    <path d="M0 0H10.500V10.500H24V28H0z" fill="#0582ff" />
    <path d="M12.500 .5 23.500 9H12.500z" fill="#0a62e8" />
  </svg>
);
const MonitorArt = () => (
  <svg width="22" height="20" viewBox="0 0 22 20">
    <rect x="1" y="1" width="20" height="14.500" rx="1.500" fill="#f1edec" stroke="#6f6b6a" strokeWidth="1.500" />
    <path d="M4.500 5h2M4.500 8h3M9 10.500h4" stroke="#8b8786" strokeWidth="1" />
    <path d="M6 16h10v1.500h2V19.500H4V17.500h2z" fill="#6f6b6a" />
  </svg>
);
const Eject = styled.div`
  margin-left: 81px;
`;

function SideRow({ art, label, w, children }: { art: React.ReactNode; label?: string; w?: number; children?: React.ReactNode }) {
  return (
    <SideItem>
      <SideIcon>{art}</SideIcon>
      {label && <Fit w={w ?? 100}>{label}</Fit>}
      {children}
    </SideItem>
  );
}

function FinderWindow() {
  const glyph = (name: Glyph, w = 32, h = 22) => <MacGlyph name={name} w={w} h={h} color={blue} sw={1.25} />;
  return (
    <Finder $x={163} $y={346} $w={1059} $h={569}>
      <Sidebar>
        <SideLights><Light $c="#ff5f57" $b="#e2463f" /></SideLights>
        <SideHeading $top={13}><Fit w={83}>Favorites</Fit></SideHeading>
        <SideRow art={glyph("clock")} />
        <SideRow art={glyph("apps")} />
        <SideRow art={glyph("home", 28, 21)} label="sangj2" w={69} />
        <SideRow art={glyph("doc", 32, 22)} label="Documents" w={119} />
        <SideRow art={glyph("desktop", 32, 21)} label="Desktop" w={87} />
        <SideRow art={glyph("folder", 31, 21)} label="0-Project" w={98} />
        <SideRow art={glyph("down", 32, 21)} label="Downloads" w={115} />
        <SideRow art={<OneDriveArt />} label="OneDrive - National Insti..." w={275} />
        <SideRow art={<CreativeArt />} label="Creative Cloud Files" w={209} />
        <SideHeading $top={21}><Fit w={91}>Locations</Fit></SideHeading>
        <SideRow art={<MonitorArt />} label="hpcdrive.nih.gov" w={174}>
          <Eject>
            <svg width="15" height="13" viewBox="0 0 15 13"><path d="M7.500 0 15 7.500H0zM0 9.300H15V12.700H0z" fill="#a8a2a2" /></svg>
          </Eject>
        </SideRow>
        <Thumb />
      </Sidebar>
      <Main>
        <Toolbar>
          <Gap $w={42} />
          <svg width="12" height="20" viewBox="0 0 12 20"><path d="M11 1 2 10 11 19" fill="none" stroke="#555" strokeWidth="2.500" /></svg>
          <Gap $w={50} />
          <svg width="12" height="20" viewBox="0 0 12 20"><path d="M1 1 10 10 1 19" fill="none" stroke="#aaa" strokeWidth="2.500" /></svg>
          <Gap $w={42} />
          <Fit w={212}>1-Project-Explore</Fit>
          <Gap $w={116} />
          <svg width="29" height="18" viewBox="0 0 29 18"><path d="M0 2h4M8 2h21M0 9h4M8 9h21M0 16h4M8 16h21" stroke="#5c5858" strokeWidth="2.300" /></svg>
          <Gap $w={14} />
          <svg width="14" height="19" viewBox="0 0 14 19"><path d="M2 6 7 1.500 12 6M2 13 7 17.500 12 13" fill="none" stroke="#5c5858" strokeWidth="2.500" /></svg>
          <Gap $w={99} />
          <svg width="26" height="27" viewBox="0 0 26 27">
            <path d="M2 2h7v6H2zM14 2h7v6h-7zM2 18.500h7v6.500H2zM14 18.500h7v6.500h-7z" fill="none" stroke="#6c6868" strokeWidth="1.800" />
          </svg>
        </Toolbar>
        <NameHeader><Fit w={54}>Name</Fit></NameHeader>
        <Files>
          {files.map((f, i) => (
            <FileRow key={i} $alt={i % 2 === 1} $sel={f.sel} $depth={f.depth}>
              <Twist>{f.twist && <TwistArt open={f.twist === "open"} sel={f.sel} />}</Twist>
              <FileArt>{f.art === "folder" ? <FolderArt /> : f.art === "text" ? <TextArt /> : <TeapotArt />}</FileArt>
              <Fit w={f.w}>{f.name}</Fit>
            </FileRow>
          ))}
        </Files>
      </Main>
    </Finder>
  );
}

export default function App() {
  return (
    <Page>
      <Global />
      <Panel $w={1186}>
        <Title $size={68.5} $indent={8.5} $line={110}><Fit w={306}>Windows</Fit></Title>
        <QuickBar>
          <PcIcon />
          <Bar $l={6} $r={23} />
          <PageCheck w={22} h={27} />
          <Gap $w={18} />
          <PaleFolder />
          <Gap $w={18} />
          <QatMenu />
          <Bar $l={19} $r={9} />
          <Fit w={69}>This PC</Fit>
        </QuickBar>
        <WindowsRibbon />
        <MapDialog />
        <Drives>
          <DriveArt><DriveIcon w={74} h={49} /></DriveArt>
          <DriveInfo $w={318} $top={3}>
            <Caption><Fit w={64}>zhaow5</Fit></Caption>
            <Caption><Fit w={260}>{"(\\\\hpcdrive.nih.gov\\scratch) (X:)"}</Fit></Caption>
            <Meter $top={1}><MeterFill style={{ width: "38.500%" }} /></Meter>
          </DriveInfo>
          <DriveArt><DriveIcon w={74} h={49} /></DriveArt>
          <DriveInfo $w={300} $top={1}>
            <Caption><Fit w={236}>{"data (\\\\hpcdrive.nih.gov) (Y:)"}</Fit></Caption>
            <Meter $top={2}><MeterFill style={{ width: "80%" }} /></Meter>
            <Caption $muted><Fit w={190}>1.10 PB free of 5.56 PB</Fit></Caption>
          </DriveInfo>
        </Drives>
      </Panel>
      <Panel $w={1277}>
        <Title $size={70} $indent={11} $line={112}><Fit w={140}>Mac</Fit></Title>
        <FinderWindow />
        <GoMenu $x={195} $y={29} $w={298} $h={524}>
          <MenuBar>
            <MenuTitle $w={48} $pad={13} $on><Fit w={20}>Go</Fit></MenuTitle>
            <MenuTitle $w={75} $pad={7}><Fit w={52}>Window</Fit></MenuTitle>
            <MenuTitle $w={60} $pad={6}><Fit w={31}>Help</Fit></MenuTitle>
          </MenuBar>
          <MenuRows>
            {topEntries.map((e) => <EntryRow key={e.label} e={e} />)}
            <Rule />
            {places.map((e) => <EntryRow key={e.label} e={e} />)}
            <Rule />
            <MenuRow>
              <Fit w={98}>Recent Folders</Fit>
              <span />
              <span />
              <svg width="15" height="12" viewBox="0 0 15 12"><path d="M5.500 1.500 10.500 6 5.500 10.500" fill="none" stroke="#222" strokeWidth="2" /></svg>
            </MenuRow>
            <Rule />
            {lastEntries.map((e) => <EntryRow key={e.label} e={e} />)}
          </MenuRows>
          <RedFrame />
        </GoMenu>
        <Connect $x={493} $y={29} $w={766} $h={352}>
          <TitleBar>
            <Light $c="#ff5f57" $b="#e24b44" />
            <Light $c="#febc2e" $b="#e0a028" />
            <Light $c="#ddd3dc" $b="#cbc1ca" />
            <WindowTitle><Fit w={191}>Connect to Server</Fit></WindowTitle>
          </TitleBar>
          <Body>
            <Address>
              <Fit w={341}>smb://hpcdrive.nih.gov/ITEB-BRCA</Fit>
              <DropButton>
                <svg width="14" height="9" viewBox="0 0 14 9"><path d="M2 2 7 6.500 12 2" fill="none" stroke="#fff" strokeWidth="2.400" strokeLinecap="round" /></svg>
              </DropButton>
            </Address>
            <ListCaption><Fit w={143}>Favorite Servers:</Fit></ListCaption>
            <ServerList>
              <ServerRow $alt={false}><ServerIcon /><Fit w={341}>smb://hpcdrive.nih.gov/ITEB-BRCA</Fit></ServerRow>
              <ServerRow $alt><ServerIcon /><Fit w={495}>smb://gigantor.nci.nih.gov/ifs/DCEG/Home/kleinam</Fit></ServerRow>
              <ServerRow $alt={false}><ServerIcon /><Fit w={283}>smb://gigantor.nci.nih.gov/ifs</Fit></ServerRow>
              <ServerRow $alt />
            </ServerList>
            <Footer>
              <Segments><SegmentArt /></Segments>
              <Help>?</Help>
              <Actions>
                <ActionButton $w={107} $l="0"><Fit w={73}>Browse</Fit></ActionButton>
                <ActionButton $w={117} $l="19px" $primary><Fit w={83}>Connect</Fit></ActionButton>
                <Gap $w={3} />
              </Actions>
            </Footer>
          </Body>
        </Connect>
      </Panel>
    </Page>
  );
}
